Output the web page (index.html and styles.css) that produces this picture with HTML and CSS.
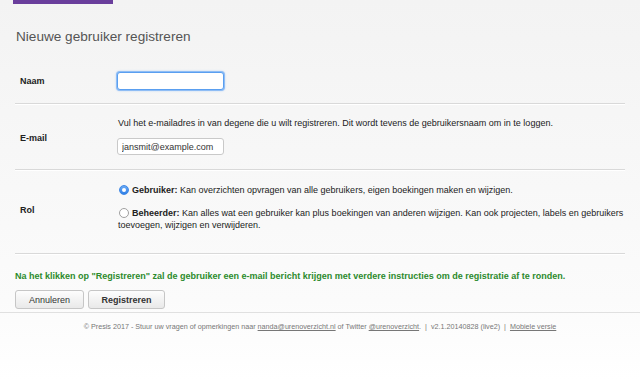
FILE: index.html
```html
<!DOCTYPE html>
<html>
    <head>
        <meta charset="utf-8">
        <title>Nieuwe gebruiker registreren</title>
        <link rel="stylesheet" href="styles.css">
    </head>
    <body>
        <div class="topbar"><span class="tab"></span></div>
        <div class="page">
            <h1 class="title">Nieuwe gebruiker registreren</h1>
            <form class="form">
                <div class="row row-naam">
                    <label class="label">Naam</label>
                    <div class="field">
                        <input type="text" class="text focus">
                    </div>
                </div>
                <div class="row row-email">
                    <label class="label">E-mail</label>
                    <div class="field">
                        <p class="help">Vul het e-mailadres in van degene die u wilt registreren. Dit wordt tevens de gebruikersnaam om in te loggen.</p>
                        <input type="text" class="text" value="jansmit@example.com">
                    </div>
                </div>
                <div class="row row-rol">
                    <label class="label">Rol</label>
                    <div class="field">
                        <p class="option"><span class="radio checked"></span><b>Gebruiker:</b> Kan overzichten opvragen van alle gebruikers, eigen boekingen maken en wijzigen.</p>
                        <p class="option second"><span class="radio"></span><b>Beheerder:</b> Kan alles wat een gebruiker kan plus boekingen van anderen wijzigen. Kan ook projecten, labels en gebruikers toevoegen, wijzigen en verwijderen.</p>
                    </div>
                </div>
            </form>
            <p class="notice">Na het klikken op "Registreren" zal de gebruiker een e-mail bericht krijgen met verdere instructies om de registratie af te ronden.</p>
            <div class="buttons">
                <button class="btn btn-cancel">Annuleren</button>
                <button class="btn btn-submit">Registreren</button>
            </div>
        </div>
        <div class="footer">
            &copy; Presis 2017 - Stuur uw vragen of opmerkingen naar <a href="javascript:;">nanda@urenoverzicht.nl</a> of Twitter <a href="javascript:;">@urenoverzicht</a>. &nbsp;| &nbsp;v2.1.20140828 (live2) &nbsp;| &nbsp;<a href="javascript:;">Mobiele versie</a>
        </div>
    </body>
</html>
```
FILE: styles.css
```css
*{
    margin: 0;
    padding: 0;
    box-sizing: border-box;
}
body{
    font-family: "Liberation Sans", Arial, sans-serif;
    font-size: 9px;
    color: #222;
    background: linear-gradient(#f3f3f3, #fbfbfb 300px, #ffffff);
    min-height: 380px;
}
.topbar{
    height: 4px;
    padding-left: 13px;
}
.tab{
    display: block;
    width: 100px;
    height: 4px;
    background-color: #6a3e9c;
}
.page{
    padding: 0 15px;
}
.title{
    margin-top: 23px;
    padding-left: 1px;
    font-size: 13.6px;
    line-height: 20px;
    font-weight: normal;
    color: #555;
}
.form{
    margin-top: 9px;
}
.row{
    display: grid;
    grid-template-columns: 102px 1fr;
    align-items: center;
    border-bottom: 1px solid #d9d9d9;
    box-shadow: 0 1px 0 #fff;
}
.row-naam{
    padding: 16px 0 13px;
}
.row-email{
    padding: 12px 0 14px;
}
.row-rol{
    padding: 14px 0 22px;
}
.label{
    padding-left: 5px;
    font-weight: bold;
    color: #222;
}
.row-email .label,
.row-rol .label{
    padding-top: 4px;
}
.help{
    line-height: 14px;
    padding-left: 1px;
}
.text{
    display: block;
    width: 107px;
    height: 17px;
    border: 1px solid #c9c9c9;
    border-radius: 3px;
    background: #fff;
    font-family: "Liberation Sans", Arial, sans-serif;
    font-size: 9px;
    color: #333;
    padding: 0 4px;
    outline: none;
}
.row-email .text{
    margin-top: 8px;
}
.text.focus{
    height: 18px;
    border: 1px solid #5a9ff0;
    box-shadow: 0 0 0 1px #8fbdf5, 0 0 2px 1px #b5d4f8;
}
.option{
    line-height: 12px;
    padding-left: 1px;
}
.option.second{
    margin-top: 11px;
}
.radio{
    display: inline-block;
    width: 10px;
    height: 10px;
    margin: 0 3px 0 1px;
    vertical-align: -2px;
    border: 1px solid #a0a0a0;
    border-radius: 50%;
    background: #fff;
    position: relative;
}
.radio.checked{
    border-color: #3f88e6;
    background: linear-gradient(#6aaaf5, #2f7fe6);
}
.radio.checked:after{
    content: "";
    position: absolute;
    left: 2px;
    top: 2px;
    width: 4px;
    height: 4px;
    border-radius: 50%;
    background: #fff;
}
.notice{
    margin-top: 16px;
    line-height: 12px;
    font-weight: bold;
    color: #2c8a2c;
}
.buttons{
    display: flex;
    gap: 4px;
    margin-top: 8px;
    margin-bottom: 3px;
}
.btn{
    height: 19px;
    border: 1px solid #c6c6c6;
    border-radius: 3px;
    background: linear-gradient(#fdfdfd, #e9e9e9);
    font-family: "Liberation Sans", Arial, sans-serif;
    font-size: 9px;
    color: #333;
}
.btn-cancel{
    width: 69px;
}
.btn-submit{
    width: 77px;
    font-weight: bold;
}
.footer{
    border-top: 1px solid #e0e0e0;
    padding-top: 8px;
    line-height: 12px;
    text-align: center;
    font-size: 7.2px;
    color: #777;
}
.footer a{
    color: #777;
}
```
